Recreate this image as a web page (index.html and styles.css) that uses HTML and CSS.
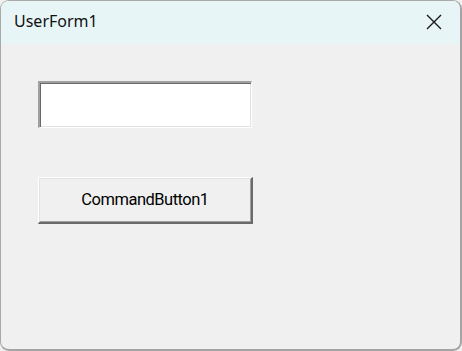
FILE: index.html
```html
<!DOCTYPE html>
<html>
<head>
<meta charset="utf-8">
<link rel="stylesheet" href="styles.css">
</head>
<body>
<div class="window">
  <div class="titlebar">
    <span class="title">UserForm1</span>
    <span class="close">
      <svg width="16" height="16" viewBox="0 0 16 16"><path d="M1 1 L15 15 M15 1 L1 15" stroke="#1a1a1a" stroke-width="1.4" fill="none"/></svg>
    </span>
  </div>
  <div class="client">
    <div class="textbox"></div>
    <div class="button">CommandButton1</div>
  </div>
</div>
</body>
</html>
```
FILE: styles.css
```css
html, body {
  margin: 0;
  padding: 0;
  width: 462px;
  height: 351px;
  background: #f0f0f0;
}
.window {
  box-sizing: border-box;
  width: 462px;
  height: 351px;
  border: 1px solid #a9a9a9;
  border-right: 2px solid #a4a4a4;
  border-bottom: 2px solid #a4a4a4;
  border-radius: 9px;
  overflow: hidden;
  background: #f0f0f0;
  display: flex;
  flex-direction: column;
}
.titlebar {
  height: 43px;
  flex: 0 0 43px;
  background: #e8f5f7;
  display: flex;
  align-items: center;
  justify-content: space-between;
  padding: 0 18px 0 13px;
}
.title {
  font-family: "Noto Sans", "Open Sans", sans-serif;
  font-size: 16px;
  color: #111;
  margin-top: -3px;
}
.close {
  display: flex;
  width: 16px;
  height: 16px;
  margin-top: -2px;
}
.client {
  display: flex;
  flex-direction: column;
  align-items: flex-start;
  padding: 37px 0 0 37px;
  gap: 49px;
}
.textbox {
  box-sizing: border-box;
  width: 214px;
  height: 47px;
  background: #fff;
  border-top: 2px solid #a0a0a0;
  border-left: 2px solid #a0a0a0;
  border-right: 1px solid #fff;
  border-bottom: 1px solid #fff;
  box-shadow: inset 1px 1px 0 #696969, inset -1px -1px 0 #e3e3e3;
}
.button {
  box-sizing: border-box;
  width: 215px;
  height: 47px;
  background: #f0f0f0;
  border-top: 1px solid #fff;
  border-left: 1px solid #fff;
  border-right: 2px solid #6a6a6a;
  border-bottom: 2px solid #6a6a6a;
  box-shadow: inset 1px 1px 0 #e3e3e3, inset -1px -1px 0 #a0a0a0;
  display: flex;
  align-items: center;
  justify-content: center;
  font-family: Roboto, sans-serif;
  font-size: 16.5px;
  letter-spacing: -0.5px;
  color: #000;
  padding-bottom: 1px;
}
```
